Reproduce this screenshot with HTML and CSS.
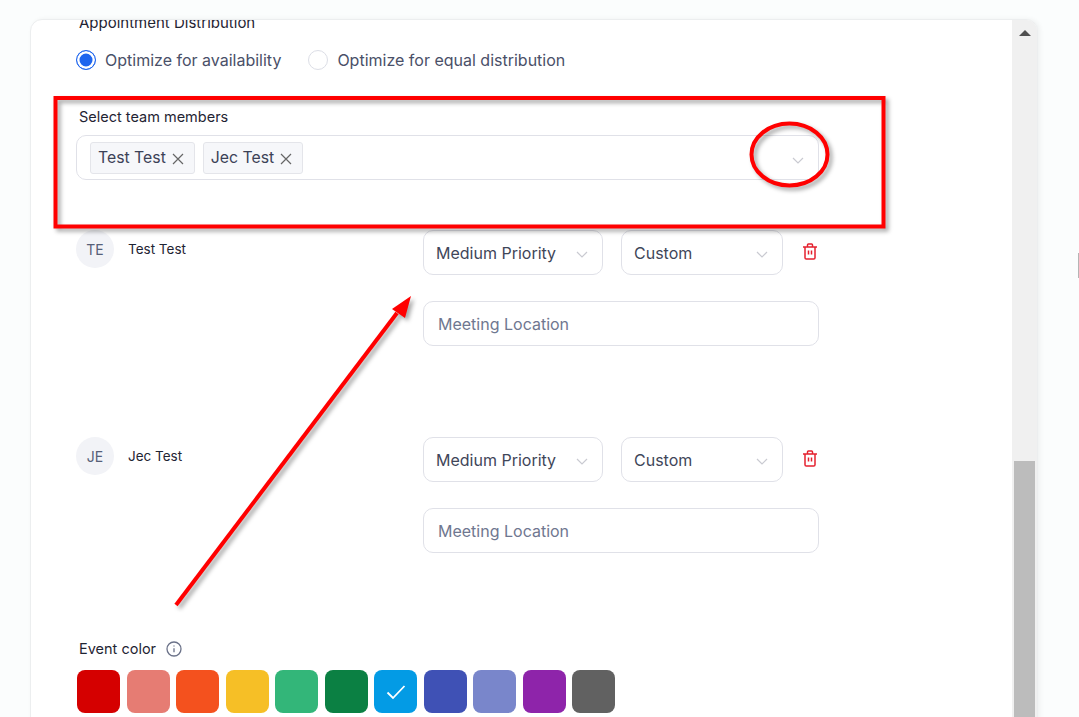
FILE: index.html
```html
<html lang="en"><head>
    <meta charset="UTF-8">
    <meta name="viewport" content="width=device-width, initial-scale=1.0">
    <title>Appointment Distribution</title>
    <link rel="stylesheet" href="styles.css">
</head>
<body>
    <div class="card">
        <div class="content">
            <div class="field-label dist-label">Appointment Distribution</div>
            <div class="radio-row">
                <label class="radio"><span class="radio-dot checked"></span>Optimize for availability</label>
                <label class="radio"><span class="radio-dot"></span>Optimize for equal distribution</label>
            </div>

            <div class="field-label team-label">Select team members</div>
            <div class="multi-select">
                <span class="tag">Test Test
                    <svg class="tag-x" viewBox="0 0 12 12"><path d="M1 1l10 10M11 1L1 11"/></svg>
                </span>
                <span class="tag">Jec Test
                    <svg class="tag-x" viewBox="0 0 12 12"><path d="M1 1l10 10M11 1L1 11"/></svg>
                </span>
                <svg class="chevron multi-chevron" viewBox="0 0 12 7"><path d="M1 1l5 5 5-5"/></svg>
            </div>

            <div class="member">
                <div class="member-info">
                    <span class="avatar">TE</span>
                    <span class="member-name">Test Test</span>
                </div>
                <div class="member-fields">
                    <div class="select-row">
                        <div class="select priority">Medium Priority
                            <svg class="chevron" viewBox="0 0 12 7"><path d="M1 1l5 5 5-5"/></svg>
                        </div>
                        <div class="select custom">Custom
                            <svg class="chevron" viewBox="0 0 12 7"><path d="M1 1l5 5 5-5"/></svg>
                        </div>
                        <svg class="trash" viewBox="0 0 16 17"><path d="M1 4h14M5.500 4V2c0-.5.3-.9.9-.9h3.200c.6 0 .9.4.9.9v2M3 4v10.700c0 .8.500 1.300 1.300 1.300h7.400c.8 0 1.300-.5 1.300-1.300V4M6.500 7.500v4M9.500 7.500v4"/></svg>
                    </div>
                    <div class="location">Meeting Location</div>
                </div>
            </div>

            <div class="member">
                <div class="member-info">
                    <span class="avatar">JE</span>
                    <span class="member-name">Jec Test</span>
                </div>
                <div class="member-fields">
                    <div class="select-row">
                        <div class="select priority">Medium Priority
                            <svg class="chevron" viewBox="0 0 12 7"><path d="M1 1l5 5 5-5"/></svg>
                        </div>
                        <div class="select custom">Custom
                            <svg class="chevron" viewBox="0 0 12 7"><path d="M1 1l5 5 5-5"/></svg>
                        </div>
                        <svg class="trash" viewBox="0 0 16 17"><path d="M1 4h14M5.500 4V2c0-.5.3-.9.9-.9h3.200c.6 0 .9.4.9.9v2M3 4v10.700c0 .8.500 1.300 1.300 1.300h7.400c.8 0 1.300-.5 1.300-1.300V4M6.500 7.500v4M9.500 7.500v4"/></svg>
                    </div>
                    <div class="location">Meeting Location</div>
                </div>
            </div>

            <div class="field-label color-label">Event color
                <svg class="info" viewBox="0 0 16 16"><circle cx="8" cy="8" r="7"/><path d="M8 7.200v4M8 4.400v1.200"/></svg>
            </div>
            <div class="swatches">
                <span class="swatch c-red"></span>
                <span class="swatch c-salmon"></span>
                <span class="swatch c-orange"></span>
                <span class="swatch c-yellow"></span>
                <span class="swatch c-mint"></span>
                <span class="swatch c-green"></span>
                <span class="swatch c-blue"><svg class="tick" viewBox="0 0 20 16"><path d="M1.500 8.500l5.500 5.500L18.500 2"/></svg></span>
                <span class="swatch c-indigo"></span>
                <span class="swatch c-lavender"></span>
                <span class="swatch c-purple"></span>
                <span class="swatch c-grey"></span>
            </div>
        </div>
        <div class="scrollbar">
            <span class="scroll-up"></span>
            <div class="scroll-thumb"></div>
        </div>
    </div>

    <!-- red markup drawn on top of the screenshot -->
    <svg class="markup" viewBox="0 0 1079 717">
        <rect x="55.500" y="98" width="828" height="128.500" />
        <ellipse cx="789.500" cy="154.500" rx="38" ry="31" />
        <path d="M176 605L397 313" />
        <polygon points="411,296 392,309 405,318" />
    </svg>
    <div class="edge-mark"></div>
</body></html>
```

FILE: styles.css
```css
* {
    box-sizing: border-box;
}
html, body {
    height: 717px;
    overflow: hidden;
}
body {
    margin: 0;
    padding: 19px 41px 0 30px;
    background-color: #fbfdfd;
    color: #1f2433;
    font-family: Inter, "Noto Sans", sans-serif;
}
.card {
    display: flex;
    height: 760px;
    background-color: #fff;
    border: 1px solid #eceeef;
    border-radius: 12px 12px 0 0;
    box-shadow: 2px 0 5px rgba(0, 0, 0, 0.05);
    overflow: hidden;
}
.content {
    flex: 1;
    min-width: 0;
    padding-left: 45px;
    margin-top: -6px;
}
.field-label {
    font-size: 14.5px;
    line-height: 18px;
    padding-left: 3px;
    color: #1f2433;
}
.dist-label {
    height: 18px;
    font-size: 15px;
}
.radio-row {
    display: flex;
    gap: 27px;
    margin-top: 17px;
}
.radio {
    display: flex;
    align-items: center;
    gap: 9px;
    height: 22px;
    font-size: 16px;
    color: #4a5068;
}
.radio-dot {
    width: 20px;
    height: 20px;
    border: 1px solid #dcdee6;
    border-radius: 50%;
    background-color: #fff;
}
.radio-dot.checked {
    border: 1.5px solid #1f66ee;
    box-shadow: inset 0 0 0 2.5px #fff;
    background-color: #1f66ee;
}
.team-label {
    margin-top: 37px;
}
.multi-select {
    position: relative;
    display: flex;
    align-items: center;
    gap: 8px;
    width: 743px;
    height: 45px;
    margin-top: 9px;
    padding-left: 13px;
    border: 1px solid #e0e1e8;
    border-radius: 10px;
}
.tag {
    display: flex;
    align-items: center;
    gap: 6px;
    height: 32px;
    padding: 0 10px 0 7px;
    font-size: 15.8px;
    color: #3c4257;
    background-color: #f6f7fa;
    border: 1px solid #e4e5ea;
    border-radius: 3px;
}
.tag-x {
    width: 12px;
    height: 12px;
    margin-top: 2px;
    fill: none;
    stroke: #666;
    stroke-width: 1.2;
}
.chevron {
    width: 12px;
    height: 7px;
    fill: none;
    stroke: #c9cad1;
    stroke-width: 1.2;
}
.multi-chevron {
    position: absolute;
    right: 14px;
    top: 21px;
}
.member {
    display: flex;
    margin-top: 50px;
    height: 115px;
}
.member + .member {
    margin-top: 92px;
}
.member-info {
    display: flex;
    gap: 14px;
    width: 347px;
}
.avatar {
    display: flex;
    align-items: center;
    justify-content: center;
    width: 38px;
    height: 38px;
    border-radius: 50%;
    background-color: #f2f3f7;
    color: #566078;
    font-size: 14px;
}
.member-name {
    font-size: 13.5px;
    line-height: 38px;
    color: #1f2433;
}
.select-row {
    display: flex;
    align-items: center;
    gap: 18px;
}
.select, .location {
    display: flex;
    align-items: center;
    height: 45px;
    padding-left: 12px;
    font-size: 16px;
    border: 1px solid #e0e1e8;
    border-radius: 10px;
}
.select {
    justify-content: space-between;
    padding-right: 14px;
    color: #3f4659;
}
.select .chevron {
    margin-top: 3px;
}
.priority {
    width: 180px;
}
.custom {
    width: 162px;
}
.trash {
    width: 16px;
    height: 17px;
    margin-top: -2px;
    margin-left: 1px;
    fill: none;
    stroke: #e5202e;
    stroke-width: 1.5;
}
.location {
    width: 396px;
    margin-top: 26px;
    padding-left: 14px;
    color: #6f7790;
}
.color-label {
    display: flex;
    align-items: center;
    gap: 10px;
    margin-top: 88px;
}
.info {
    width: 16px;
    height: 16px;
    fill: none;
    stroke: #6b7289;
    stroke-width: 1.3;
}
.swatches {
    display: flex;
    gap: 6.5px;
    margin-top: 12px;
    margin-left: 1px;
}
.swatch {
    display: flex;
    align-items: center;
    justify-content: center;
    width: 43px;
    height: 43px;
    border-radius: 8px;
}
.tick {
    width: 20px;
    height: 16px;
    fill: none;
    stroke: #fff;
    stroke-width: 1.8;
}
.c-red { background-color: #d50000; }
.c-salmon { background-color: #e67c73; }
.c-orange { background-color: #f4511e; }
.c-yellow { background-color: #f6bf26; }
.c-mint { background-color: #33b679; }
.c-green { background-color: #0b8043; }
.c-blue { background-color: #039be5; }
.c-indigo { background-color: #3f51b5; }
.c-lavender { background-color: #7986cb; }
.c-purple { background-color: #8e24aa; }
.c-grey { background-color: #616161; }
.scrollbar {
    flex: none;
    width: 25px;
    padding: 0 2px;
    background-color: #f0f0f0;
}
.scroll-up {
    display: block;
    width: 0;
    height: 0;
    margin: 10px auto 0;
    border-left: 6px solid transparent;
    border-right: 6px solid transparent;
    border-bottom: 6px solid #505050;
}
.scroll-thumb {
    height: 300px;
    margin-top: 425px;
    background-color: #bcbcbc;
}
.markup {
    position: absolute;
    left: 0;
    top: 0;
    width: 1079px;
    height: 717px;
    fill: none;
    stroke: #ff0000;
    stroke-width: 4;
    filter: drop-shadow(3px 3px 2px rgba(0, 0, 0, 0.35));
}
.markup polygon {
    fill: #ff0000;
    stroke: none;
}
.edge-mark {
    position: absolute;
    left: 1078px;
    top: 253px;
    width: 1px;
    height: 25px;
    background-color: #b5b5b5;
}
```
